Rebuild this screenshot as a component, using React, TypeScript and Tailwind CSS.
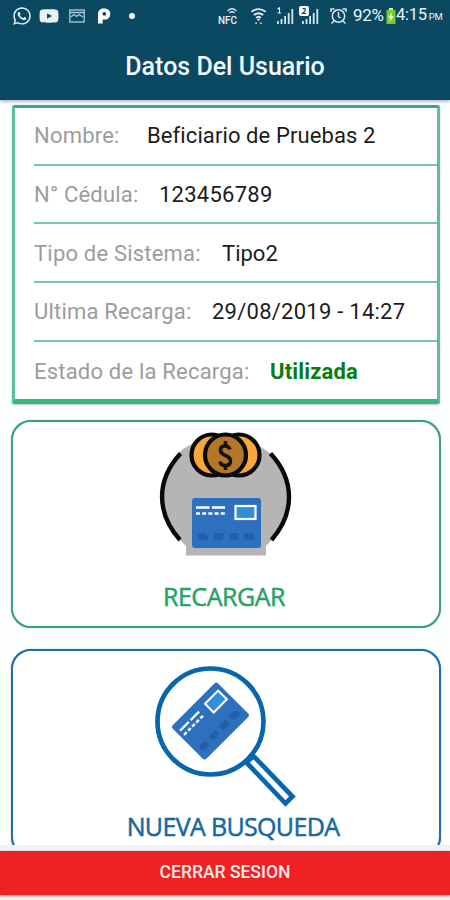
import React from "react";
import { FaWhatsapp, FaYoutube } from "react-icons/fa";

const rows = [
  { label: "Nombre:", value: "Beficiario de Pruebas 2", width: "w-[113px]", tone: "tracking-[0.100px] text-[#1c1c1c]" },
  { label: "N° Cédula:", value: "123456789", width: "w-[125px]", tone: "tracking-[0.250px] text-[#1c1c1c]" },
  { label: "Tipo de Sistema:", value: "Tipo2", width: "w-[188px]", tone: "text-[#1c1c1c]" },
  { label: "Ultima Recarga:", value: "29/08/2019 - 14:27", width: "w-[178px]", tone: "tracking-[0.250px] text-[#1c1c1c]" },
  { label: "Estado de la Recarga:", value: "Utilizada", width: "w-[236px]", tone: "tracking-[0.150px] font-bold text-[#0a7d12]" },
];

function SignalBars() {
  return (
    <g fill="#d5e6ec">
      <rect x="0" y="13" width="1.8" height="3" />
      <rect x="3.6" y="11" width="1.8" height="5" />
      <rect x="7.2" y="8" width="1.8" height="8" />
      <rect x="10.8" y="5" width="1.8" height="11" />
      <rect x="14.4" y="1" width="1.8" height="15" />
    </g>
  );
}

function StatusBar() {
  return (
    <div className="flex h-[31px] items-center text-[#e9f3f6]">
      <FaWhatsapp className="ml-[12px] size-[20px] shrink-0" />
      <FaYoutube className="ml-[7px] h-[18px] w-[20px] shrink-0" />
      <svg className="ml-[10px] shrink-0" width="16" height="14" viewBox="0 0 16 14" fill="none" stroke="#a9cdda" strokeWidth="1.300">
        <rect x="0.800" y="1" width="14.400" height="12" />
        <path d="M1 3.500H15M2 8L5 5.500L7.500 7.500L10 5.500L14 8" />
      </svg>
      <svg className="ml-[12px] shrink-0" width="15" height="16" viewBox="0 0 15 16">
        <path d="M1 15.500V6C1 2.500 3.300.500 7 .500C11 .500 13.300 2.700 13.300 6C13.300 9.500 11 11.500 8 11.500H5.700V15.500Z" fill="white" />
        <circle cx="7.300" cy="5.800" r="1.900" fill="#0a4a62" />
      </svg>
      <span className="ml-[17px] size-[6px] shrink-0 rounded-full bg-white" />
      <svg className="ml-[83px] shrink-0" width="20" height="18" viewBox="0 0 20 18">
        <path d="M9.500 4Q14 -.500 18.500 4M11.500 6Q14 3.500 16.500 6" fill="none" stroke="#d5e6ec" strokeWidth="1.300" />
        <text x="0" y="17" fontFamily="Roboto, sans-serif" fontSize="10" fontWeight="500" fill="#e9f3f6">NFC</text>
      </svg>
      <svg className="ml-[12px] shrink-0" width="17" height="18" viewBox="0 0 18 18" fill="none" stroke="#dcebf0" strokeWidth="2">
        <path d="M1.500 4.500Q9 -1 16.500 4.500M4 8Q9 4 14 8M6.500 11Q9 8.500 11.500 11" />
        <path d="M7 12H11L9 14.500Z" fill="#dcebf0" stroke="none" />
        <path d="M5.500 16.500H7.500M10.500 16.500H12.500" strokeWidth="1.200" />
      </svg>
      <svg className="ml-[9px] shrink-0" width="18" height="18" viewBox="0 0 18 18">
        <g transform="translate(1 1)"><SignalBars /></g>
        <path d="M1.500 2L3.500.800V6M1.500 6H5" fill="none" stroke="#e9f3f6" strokeWidth="1.100" />
      </svg>
      <svg className="ml-[5px] shrink-0" width="21" height="19" viewBox="0 0 21 19">
        <g transform="translate(3 2)"><SignalBars /></g>
        <rect x="0" y="0" width="10" height="10" rx="2" fill="white" />
        <path d="M3.500 3Q6 1.500 6.500 3.500Q6.500 5 3.500 7.500H7" fill="none" stroke="#0b4963" strokeWidth="1.200" />
      </svg>
      <svg className="ml-[10px] shrink-0" width="17" height="18" viewBox="0 0 17 18" fill="none" stroke="#d5e6ec" strokeWidth="1.500">
        <circle cx="8.500" cy="9" r="6.200" />
        <path d="M8.500 5V9.500L10.500 11M1 5V2H4.500M12.500 2H16V5M4 14L1.500 16.500M13 14L15.500 16.500" />
      </svg>
      <span className="ml-[6px] w-[33px] shrink-0 whitespace-nowrap text-[17px] leading-none tracking-[-0.300px]">92%</span>
      <svg className="shrink-0" width="10" height="18" viewBox="0 0 10 18">
        <rect x="3" y="1" width="4" height="3" fill="#d5ecd5" />
        <rect x="0.500" y="3" width="9" height="14" fill="#79ce2c" />
        <path d="M6 5.500L2 10.500H4.500L3.500 14.500L8 9.300H5.300Z" fill="white" />
      </svg>
      <span className="text-[16.500px] leading-none tracking-[-0.300px]">4:15</span>
      <span className="mt-[3px] ml-[2px] text-[9.500px] leading-none">PM</span>
    </div>
  );
}

/* Bank card drawn around a 70 x 50 box. */
function BankCard() {
  return (
    <g>
      <rect width="69" height="50" rx="3" fill="#2d70bd" />
      <path d="M4 9.500H17.500M20 9.500H33" stroke="white" strokeWidth="2.400" />
      <path d="M4 15.500H33" stroke="white" strokeWidth="2.600" strokeDasharray="4 2.200" />
      <rect x="43.500" y="8" width="20" height="13" fill="#3190d5" stroke="white" strokeWidth="2.200" />
      <g fill="#245fa7">
        <path d="M6 42V37L9 35H13L16 38V42Z" />
        <path d="M21.500 35H31.500V40L29 42H21.500Z" />
        <path d="M37 35H47V42H39L37 40Z" />
        <path d="M52 35H60L63 38V42H54L52 40Z" />
      </g>
    </g>
  );
}

function RechargeArt() {
  return (
    <svg className="mr-[2px]" width="134" height="128" viewBox="158 430 134 128">
      <path d="M209 434H241L270 453C287 466 289 479 289 496C288 519 280 532 266 546V555.500H186V546C172 532 162 518 162 496C162 474 170 460 183 449Z" fill="#b5b5b6" />
      <g fill="none" stroke="#090909" strokeWidth="4.400">
        <path d="M180.500 453.500C156 480 156 513 180 540" />
        <path d="M270.500 453.500C295 480 295 513 271.500 540" />
      </g>
      <g stroke="#090909" strokeWidth="4.200">
        <circle cx="212" cy="455" r="20.500" fill="#f6a83b" />
        <circle cx="239" cy="455" r="20.500" fill="#f6a83b" />
        <circle cx="225.500" cy="455" r="20.500" fill="#b47728" />
      </g>
      <path d="M230 449.500C229 446.500 227.500 446 225 446C222 446 220.500 447.500 220.500 450C220.500 453 222.500 454 225.500 455.500C229 457 230.500 458.500 230.500 461C230.500 464 229 465.500 225.500 465.500C222.500 465.500 220.500 464.500 220 461.500M225.500 441V446M225.500 465V470" fill="none" stroke="#15110b" strokeWidth="3.600" />
      <g transform="translate(192 498)"><BankCard /></g>
    </svg>
  );
}

function SearchArt() {
  return (
    <svg width="144" height="144" viewBox="154 664 144 144">
      <g fill="white" stroke="#0866aa" strokeWidth="4.700">
        <path d="M246.500 762.500L253.500 756L292.500 796.500L285.500 803.500Z" />
        <circle cx="210.500" cy="721.500" r="53" />
      </g>
      <g transform="translate(171 727) rotate(-45) scale(.930 .950)"><BankCard /></g>
    </svg>
  );
}

export default function App() {
  return (
    <div className="flex h-[900px] w-[450px] flex-col overflow-hidden bg-[#fdfefe] font-['Roboto','Liberation_Sans',sans-serif]">
      <header className="z-10 h-[100px] shrink-0 bg-[#0b4963] shadow-[0_1px_4px_#8fa5b1]">
        <StatusBar />
        <h1 className="pt-[19px] text-center text-[25px] leading-[34px] font-medium text-[#f0f9fc]">Datos Del Usuario</h1>
      </header>
      <main className="flex h-[745px] shrink-0 flex-col overflow-hidden pt-[5px] pr-[9px] pl-[11px]">
        <section className="mr-px ml-px h-[299px] shrink-0 rounded-[3px] border-x-[3px] border-t-[3px] border-b-[5px] border-x-[#5fbea0] border-t-[#32a98c] border-b-[#35b77e] bg-white pl-[19px] shadow-[0_1px_2px_#b4c2c9]">
          {rows.map((row, i) => (
            <div key={row.label} className={`flex items-center whitespace-nowrap text-[22px] ${i < 4 ? "border-b-2 border-[#75caa5]" : ""} ${i === 0 ? "h-[57.500px]" : "h-[58.700px] pt-px"}`}>
              <span className={`${row.width} shrink-0 tracking-[0.200px] text-[#9c9c9c]`}>{row.label}</span>
              <span className={row.tone}>{row.value}</span>
            </div>
          ))}
        </section>
        <button className="mt-[16px] flex h-[208px] shrink-0 flex-col items-center rounded-[20px] border-[2px] border-[#38a477] bg-white pt-[8px] shadow-[0_0_1px_#38a477]">
          <RechargeArt />
          <span className="mt-[20px] mr-[4px] font-['Open_Sans','Noto_Sans',sans-serif] text-[25px] leading-[36px] tracking-[-0.450px] text-[#27a168] [-webkit-text-stroke:0.500px_#27a168]">RECARGAR</span>
        </button>
        <button className="mt-[21px] flex h-[208px] shrink-0 flex-col items-center rounded-[20px] border-[2px] border-[#1d6eae] bg-white pt-[13px] shadow-[0_0_1px_#1d6eae]">
          <SearchArt />
          <span className="mt-[1px] mr-[-14px] font-['Open_Sans','Noto_Sans',sans-serif] text-[25px] leading-[34px] tracking-[-0.650px] text-[#1768a2] [-webkit-text-stroke:0.500px_#1768a2]">NUEVA BUSQUEDA</span>
        </button>
      </main>
      <footer className="flex flex-1 flex-col bg-[#f2f2f2] pt-[6px]">
        <button className="h-[44px] bg-[#ee2224] pb-px text-[17.500px] font-medium text-[#ffe8e8] shadow-[0_1px_3px_#999]">CERRAR SESION</button>
      </footer>
    </div>
  );
}
